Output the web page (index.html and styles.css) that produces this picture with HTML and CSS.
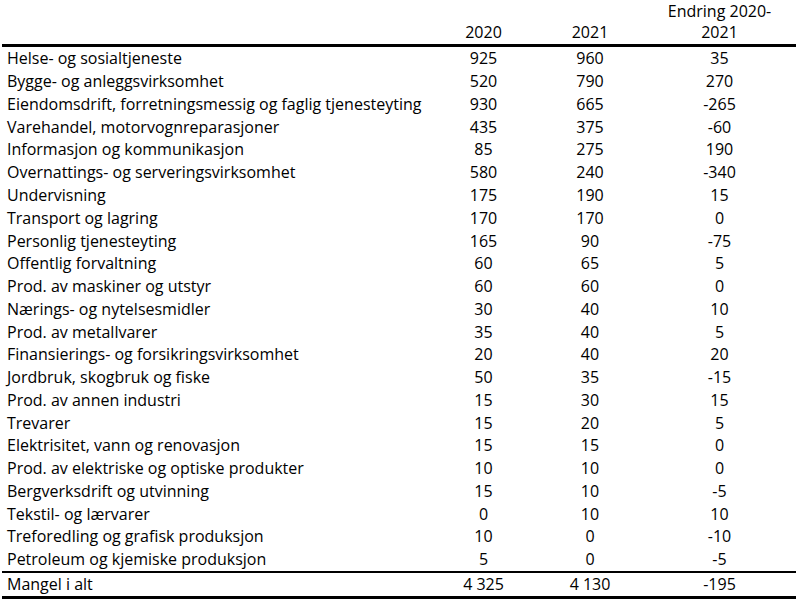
FILE: index.html
```html
<!DOCTYPE html>
<html lang="no">
<head>
<meta charset="utf-8">
<link rel="stylesheet" href="styles.css">
</head>
<body>
<table class="tbl">
  <colgroup>
    <col class="c-label"><col class="c-num"><col class="c-num2"><col class="c-chg">
  </colgroup>
  <thead>
    <tr class="head">
      <th></th>
      <th class="num">2020</th>
      <th class="num">2021</th>
      <th class="num">Endring 2020-<br>2021</th>
    </tr>
  </thead>
  <tbody>
    <tr><td>Helse- og sosialtjeneste</td><td class="num">925</td><td class="num">960</td><td class="num">35</td></tr>
    <tr><td>Bygge- og anleggsvirksomhet</td><td class="num">520</td><td class="num">790</td><td class="num">270</td></tr>
    <tr><td>Eiendomsdrift, forretningsmessig og faglig tjenesteyting</td><td class="num">930</td><td class="num">665</td><td class="num">-265</td></tr>
    <tr><td>Varehandel, motorvognreparasjoner</td><td class="num">435</td><td class="num">375</td><td class="num">-60</td></tr>
    <tr><td>Informasjon og kommunikasjon</td><td class="num">85</td><td class="num">275</td><td class="num">190</td></tr>
    <tr><td>Overnattings- og serveringsvirksomhet</td><td class="num">580</td><td class="num">240</td><td class="num">-340</td></tr>
    <tr><td>Undervisning</td><td class="num">175</td><td class="num">190</td><td class="num">15</td></tr>
    <tr><td>Transport og lagring</td><td class="num">170</td><td class="num">170</td><td class="num">0</td></tr>
    <tr><td>Personlig tjenesteyting</td><td class="num">165</td><td class="num">90</td><td class="num">-75</td></tr>
    <tr><td>Offentlig forvaltning</td><td class="num">60</td><td class="num">65</td><td class="num">5</td></tr>
    <tr><td>Prod. av maskiner og utstyr</td><td class="num">60</td><td class="num">60</td><td class="num">0</td></tr>
    <tr><td>Nærings- og nytelsesmidler</td><td class="num">30</td><td class="num">40</td><td class="num">10</td></tr>
    <tr><td>Prod. av metallvarer</td><td class="num">35</td><td class="num">40</td><td class="num">5</td></tr>
    <tr><td>Finansierings- og forsikringsvirksomhet</td><td class="num">20</td><td class="num">40</td><td class="num">20</td></tr>
    <tr><td>Jordbruk, skogbruk og fiske</td><td class="num">50</td><td class="num">35</td><td class="num">-15</td></tr>
    <tr><td>Prod. av annen industri</td><td class="num">15</td><td class="num">30</td><td class="num">15</td></tr>
    <tr><td>Trevarer</td><td class="num">15</td><td class="num">20</td><td class="num">5</td></tr>
    <tr><td>Elektrisitet, vann og renovasjon</td><td class="num">15</td><td class="num">15</td><td class="num">0</td></tr>
    <tr><td>Prod. av elektriske og optiske produkter</td><td class="num">10</td><td class="num">10</td><td class="num">0</td></tr>
    <tr><td>Bergverksdrift og utvinning</td><td class="num">15</td><td class="num">10</td><td class="num">-5</td></tr>
    <tr><td>Tekstil- og lærvarer</td><td class="num">0</td><td class="num">10</td><td class="num">10</td></tr>
    <tr><td>Treforedling og grafisk produksjon</td><td class="num">10</td><td class="num">0</td><td class="num">-10</td></tr>
    <tr class="last"><td>Petroleum og kjemiske produksjon</td><td class="num">5</td><td class="num">0</td><td class="num">-5</td></tr>
  </tbody>
  <tfoot>
    <tr class="total"><td>Mangel i alt</td><td class="num">4 325</td><td class="num">4 130</td><td class="num">-195</td></tr>
  </tfoot>
</table>
</body>
</html>
```
FILE: styles.css
```css
html, body {
  margin: 0;
  padding: 0;
  background: #fff;
}
body {
  padding: 0 4px 0 2px;
  font-family: "Open Sans", "Lato", "Liberation Sans", sans-serif;
  font-size: 16px;
  color: #000;
}
.tbl {
  width: 794px;
  border-collapse: collapse;
  table-layout: fixed;
}
.c-label { width: 428px; }
.c-num { width: 107px; }
.c-num2 { width: 106px; }
.c-chg { width: 153px; }
.tbl th, .tbl td {
  padding: 0;
  font-weight: normal;
  text-align: left;
  white-space: nowrap;
}
.tbl td:first-child { padding-left: 5px; }
.tbl .num { text-align: center; }
.head th {
  height: 43px;
  line-height: 21px;
  vertical-align: bottom;
  padding-bottom: 1px;
  border-bottom: 3px solid #000;
}
tbody tr td { height: 22.77px; line-height: 22px; }
.last td { border-bottom: 2px solid #000; }
.total td {
  height: 23px;
  line-height: 22px;
  border-bottom: 3px solid #000;
}
```
